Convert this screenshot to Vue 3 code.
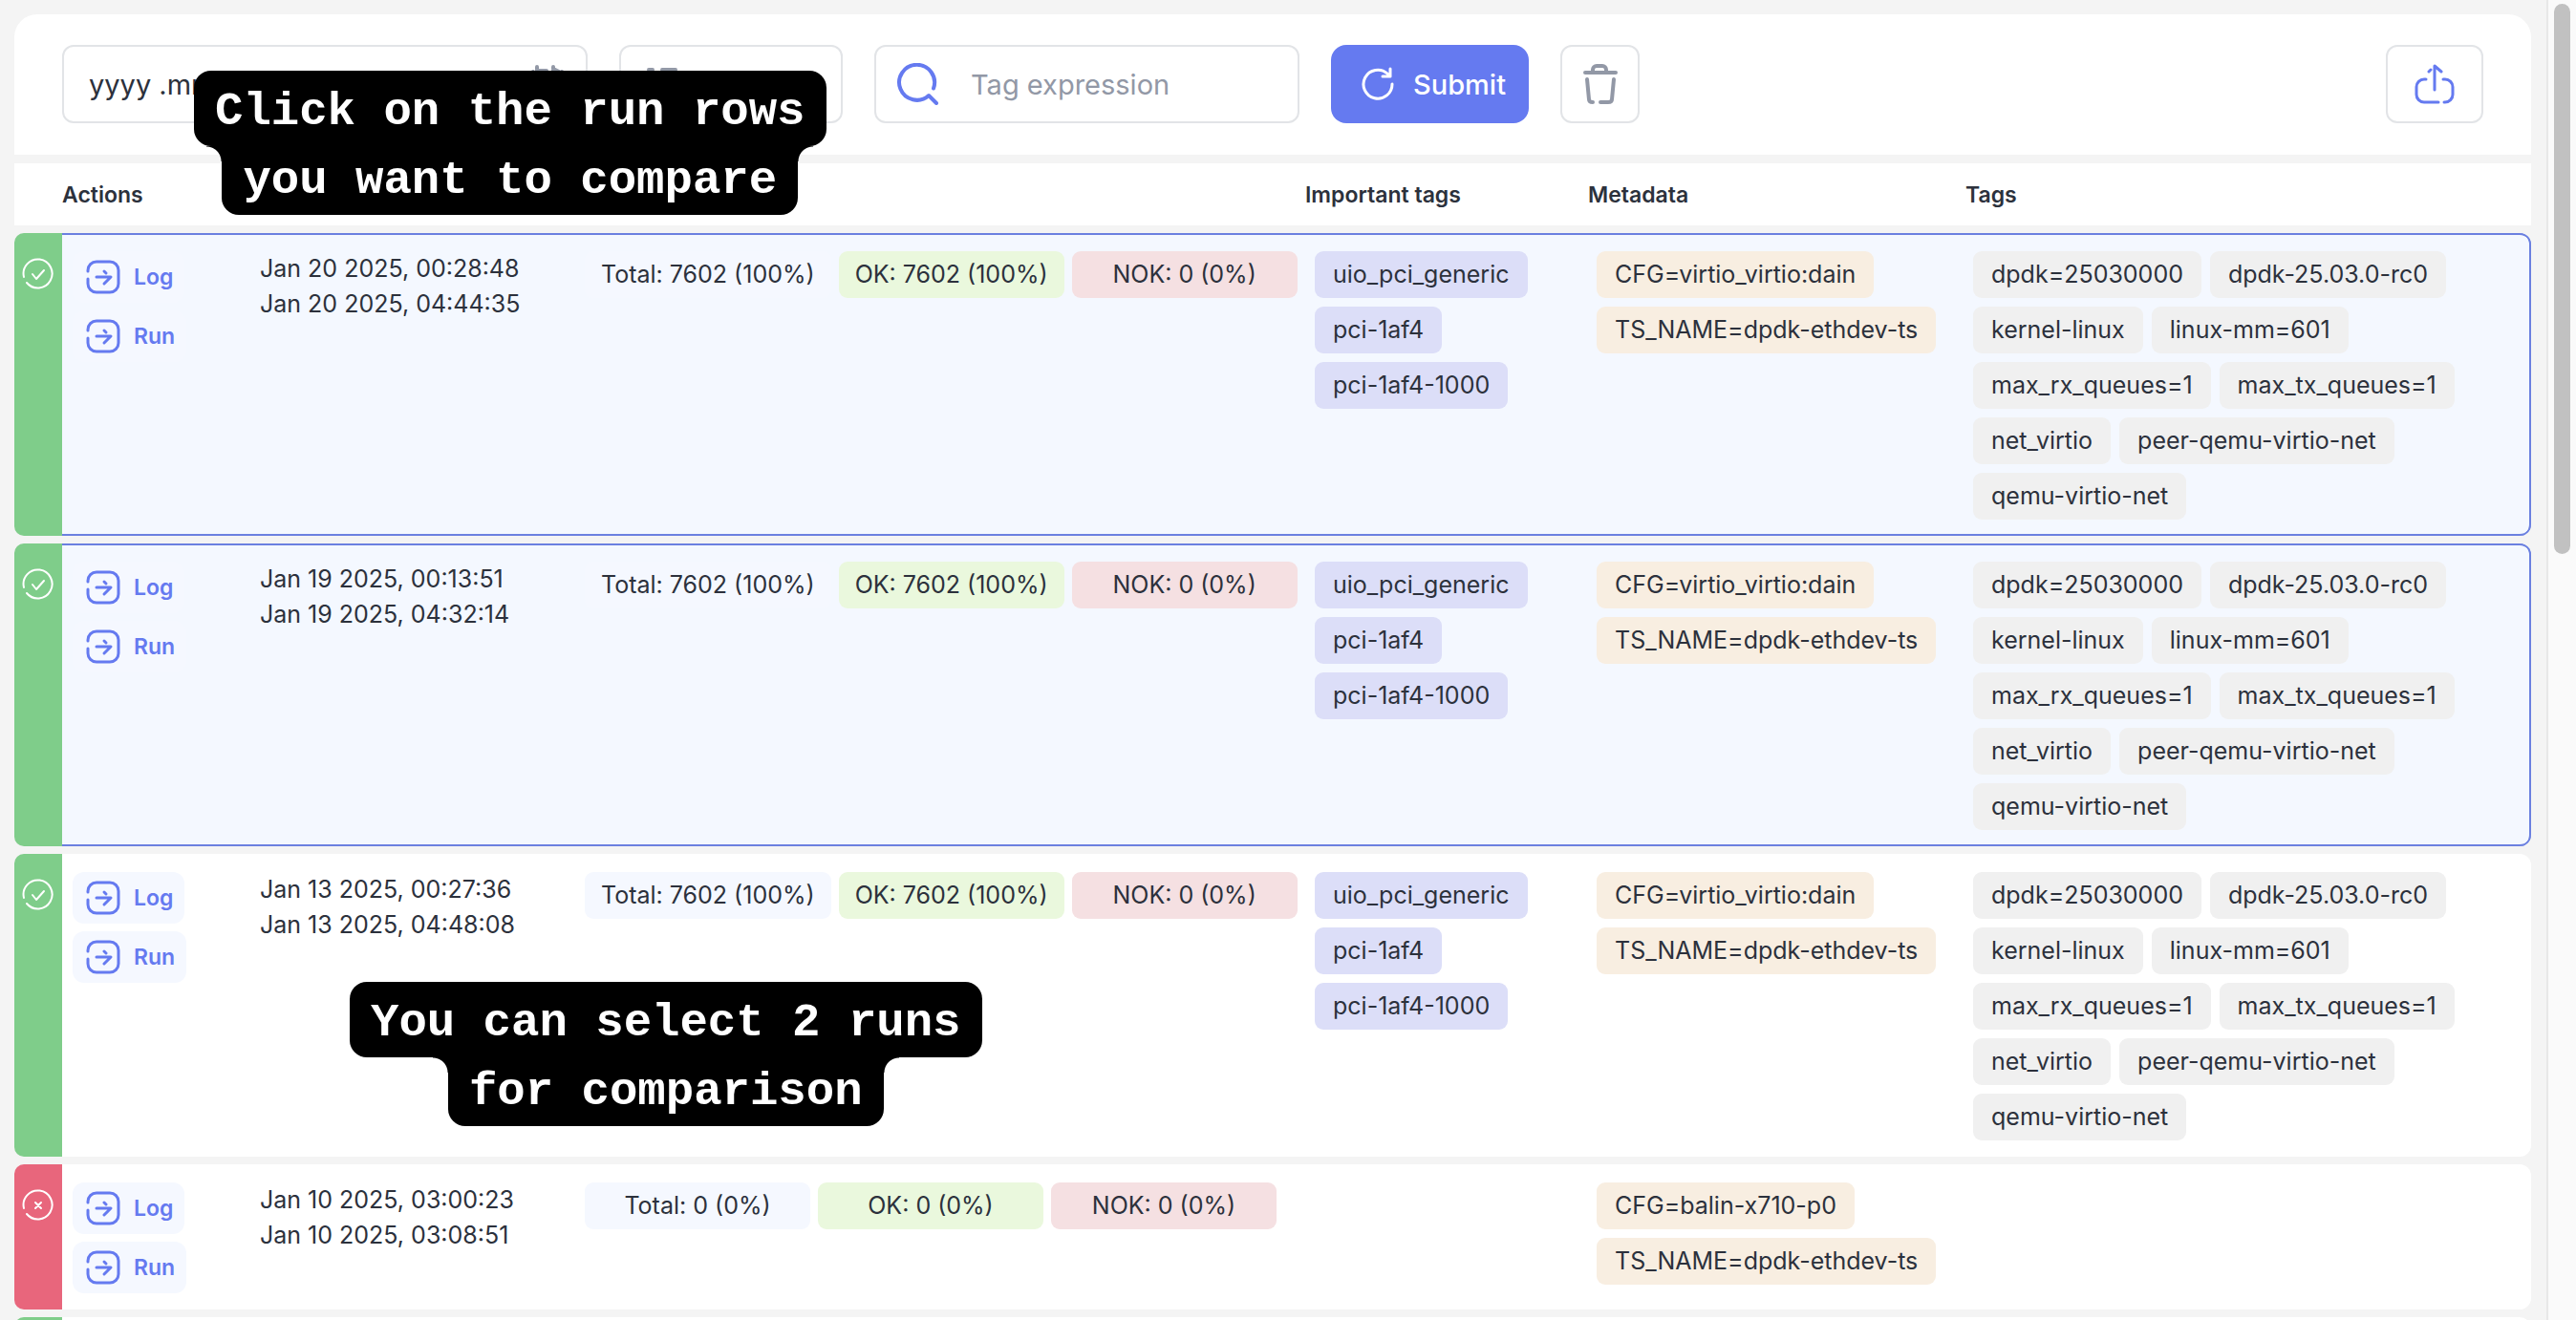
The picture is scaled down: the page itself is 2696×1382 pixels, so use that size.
<script setup>
const tags = [
  'dpdk=25030000', 'dpdk-25.03.0-rc0', 'kernel-linux', 'linux-mm=601',
  'max_rx_queues=1', 'max_tx_queues=1', 'net_virtio', 'peer-qemu-virtio-net', 'qemu-virtio-net',
]
const important = ['uio_pci_generic', 'pci-1af4', 'pci-1af4-1000']
const virtio = ['CFG=virtio_virtio:dain', 'TS_NAME=dpdk-ethdev-ts']
const links = ['Log', 'Run']
const full = { total: '7602 (100%)', ok: '7602 (100%)', nok: '0 (0%)' }
const empty = { total: '0 (0%)', ok: '0 (0%)', nok: '0 (0%)' }

const runs = [
  { id: 1, ok: true, selected: true, links, start: 'Jan 20 2025, 00:28:48', finish: 'Jan 20 2025, 04:44:35', stats: full, important, meta: virtio, tags },
  { id: 2, ok: true, selected: true, links, start: 'Jan 19 2025, 00:13:51', finish: 'Jan 19 2025, 04:32:14', stats: full, important, meta: virtio, tags },
  { id: 3, ok: true, selected: false, links, start: 'Jan 13 2025, 00:27:36', finish: 'Jan 13 2025, 04:48:08', stats: full, important, meta: virtio, tags },
  { id: 4, ok: false, selected: false, links, start: 'Jan 10 2025, 03:00:23', finish: 'Jan 10 2025, 03:08:51', stats: empty, important: [], meta: ['CFG=balin-x710-p0', 'TS_NAME=dpdk-ethdev-ts'], tags: [] },
  { id: 5, ok: true, selected: false, links: [], start: '', finish: '', stats: null, important: [], meta: [], tags: [] },
]
</script>

<template>
  <div class="page">
    <main class="content">
      <form class="toolbar" @submit.prevent>
        <label class="field date">
          <input type="text" value="yyyy .mm.dd" aria-label="Date range" />
          <svg class="icon40" viewBox="0 0 40 40"><path d="M9 2v7M9 6h10M26 2v7M26 4l6 3M5 7q-3 2-3 6v17a7 7 0 0 0 7 7h22a7 7 0 0 0 7-7V13q0-4-3-6M2 15h36" /></svg>
        </label>
        <button class="field mode" type="button" aria-label="View mode">
          <svg class="icon40" viewBox="0 0 40 40"><path d="M6 5h4M20 5h14M2 12h8M20 12h18M2 22h8M20 22h18M2 32h8M20 32h18" /></svg>
        </button>
        <label class="field search">
          <svg class="search-icon" viewBox="0 0 44 44"><path d="M39 26.500A18.500 18.500 0 1 0 34 34l8 8" /></svg>
          <input type="text" placeholder="Tag expression" aria-label="Tag expression" />
        </label>
        <button class="submit" type="submit">
          <svg class="icon36" viewBox="0 0 36 36"><path d="M33 18A15 15 0 1 1 28 7l3 3M31 2v8h-8" /></svg>
          Submit
        </button>
        <button class="field trash" type="button" aria-label="Clear">
          <svg class="trash-icon" viewBox="0 0 36 42"><path d="M2 9h32M10 9V6a4 4 0 0 1 4-4h6a4 4 0 0 1 4 4v3M4 16l2 21q0 3 4 3M32 16l-2 21q0 3-4 3h-8" /></svg>
        </button>
        <button class="field share" type="button" aria-label="Share">
          <svg class="share-icon" viewBox="0 0 42 42"><path d="M21 27V2l7 6M15 8l2-2M12 16h-2a8 8 0 0 0-8 8v8a8 8 0 0 0 8 8h15M30 16h2a8 8 0 0 1 8 8v8a8 8 0 0 1-8 8h-1" /></svg>
        </button>
      </form>

      <div class="head">
        <span class="c-actions">Actions</span>
        <span class="c-important">Important tags</span>
        <span class="c-meta">Metadata</span>
        <span>Tags</span>
      </div>

      <article v-for="run in runs" :key="run.id" class="run" :class="{ selected: run.selected, failed: !run.ok }">
        <div class="status">
          <svg class="status-icon" viewBox="0 0 34 34">
            <path d="M2 20A15 15 0 1 1 5 26" />
            <path v-if="run.ok" d="M11 17l4 5 8-9" />
            <path v-else d="M14 14l6 6M20 14l-6 6" />
          </svg>
        </div>
        <div class="body">
          <div class="actions">
            <a v-for="name in run.links" :key="name" class="action" href="#">
              <svg class="icon36" viewBox="0 0 36 36"><path d="M2 12v-1a9 9 0 0 1 9-9h14a9 9 0 0 1 9 9v14a9 9 0 0 1-9 9H11a9 9 0 0 1-9-9v-5M11 18h15l-7 7M19 12l2 2" /></svg>
              {{ name }}
            </a>
          </div>
          <div class="dates">{{ run.start }}<br />{{ run.finish }}</div>
          <div class="stats">
            <template v-if="run.stats">
              <span class="chip total">Total: {{ run.stats.total }}</span>
              <span class="chip ok">OK: {{ run.stats.ok }}</span>
              <span class="chip nok">NOK: {{ run.stats.nok }}</span>
            </template>
          </div>
          <div class="chips important">
            <span v-for="t in run.important" :key="t" class="chip violet">{{ t }}</span>
          </div>
          <div class="chips meta">
            <span v-for="t in run.meta" :key="t" class="chip sand">{{ t }}</span>
          </div>
          <div class="chips tags">
            <span v-for="t in run.tags" :key="t" class="chip gray">{{ t }}</span>
          </div>
        </div>
      </article>
    </main>
    <div class="scrollbar"><div class="thumb"></div></div>

    <div class="callout first"><span>Click on the run rows</span><span>you want to compare</span></div>
    <div class="callout second"><span>You can select 2 runs</span><span>for comparison</span></div>
  </div>
</template>

<style>
body {
  background: #f4f4f4;
}
</style>

<style scoped>
.page {
  position: relative;
  display: flex;
  height: 100vh;
  overflow: hidden;
  font-family: Inter, "Liberation Sans", sans-serif;
  font-size: 25px;
  color: #2c313c;
}
.page * {
  box-sizing: border-box;
}
.content {
  flex: 1;
  min-width: 0;
  padding: 15px 16px 0 15px;
}
svg {
  flex: none;
  display: block;
  fill: none;
  stroke: currentColor;
  stroke-width: 3;
  stroke-linecap: round;
  stroke-linejoin: round;
}
button, input {
  font: inherit;
  color: inherit;
}
.toolbar {
  display: flex;
  gap: 33px;
  padding: 32px 50px 33px;
  background: #fff;
  border-radius: 24px 24px 0 0;
  font-size: 29px;
}
.field {
  display: flex;
  align-items: center;
  height: 82px;
  border: 2px solid #e2e4e7;
  border-radius: 12px;
  background: #fff;
  color: #9298a6;
}
.field input {
  flex: 1;
  min-width: 0;
  padding: 0;
  border: 0;
  outline: 0;
  background: none;
}
.date {
  width: 550px;
  padding: 0 20px 0 26px;
}
.date input {
  color: #2c313c;
}
.mode {
  width: 234px;
  padding: 0 23px;
}
.search {
  width: 445px;
  padding: 0 21px;
  gap: 34px;
}
.search input::placeholder {
  color: #9298a6;
  opacity: 1;
}
.search-icon {
  width: 44px;
  height: 44px;
  stroke-width: 4;
  color: #657af0;
}
.submit {
  display: flex;
  align-items: center;
  gap: 19px;
  height: 82px;
  width: 207px;
  padding: 0 0 0 31px;
  border: 0;
  border-radius: 16px;
  background: #657af0;
  color: #fff;
  font-weight: 500;
}
.trash {
  justify-content: center;
  width: 83px;
  padding: 0;
}
.trash-icon {
  width: 36px;
  height: 42px;
  stroke-width: 4;
}
.share {
  justify-content: center;
  width: 102px;
  margin-left: auto;
  padding: 0;
  color: #657af0;
}
.share-icon {
  width: 42px;
  height: 42px;
}
.icon40 {
  width: 40px;
  height: 40px;
  stroke-width: 4;
}
.icon36 {
  width: 36px;
  height: 36px;
}
.head {
  display: flex;
  align-items: center;
  height: 65px;
  margin: 9px 0 8px;
  padding-left: 50px;
  background: #fff;
  font-size: 23px;
  font-weight: 600;
}
.c-actions {
  width: 1301px;
}
.c-important {
  width: 296px;
}
.c-meta {
  width: 395px;
}
.run {
  display: flex;
  margin-bottom: 8px;
}
.status {
  width: 50px;
  padding: 26px 8px 0;
  border-radius: 10px 0 0 10px;
  background: #7fcd8a;
  color: #fff;
}
.failed .status {
  background: #e8667c;
}
.status-icon {
  width: 34px;
  height: 34px;
  stroke-width: 2;
}
.body {
  flex: 1;
  display: flex;
  min-width: 0;
  padding: 19px 16px 17px 11px;
  border-radius: 0 12px 12px 0;
  background: #fff;
}
.selected .body {
  background: #f4f8ff;
  box-shadow: inset 0 2px #6b80e0, inset 0 -2px #6b80e0, inset -2px 0 #6b80e0;
}
.actions {
  display: flex;
  flex-direction: column;
  align-items: flex-start;
  gap: 8px;
  width: 196px;
}
.action {
  display: flex;
  align-items: center;
  gap: 14px;
  height: 54px;
  padding: 0 12px 0 14px;
  border-radius: 12px;
  background: #f5f8ff;
  color: #657af0;
  font-size: 23px;
  font-weight: 600;
  text-decoration: none;
}
.dates {
  width: 340px;
  line-height: 37px;
}
.stats {
  display: flex;
  align-items: flex-start;
  gap: 8px;
  width: 764px;
}
.chip {
  height: 49px;
  padding: 0 19px;
  border-radius: 9px;
  line-height: 49px;
  white-space: nowrap;
}
.stats .chip {
  min-width: 236px;
  padding: 0 17px;
  text-align: center;
}
.total {
  background: #f5f8ff;
}
.ok {
  background: #eaf8dd;
}
.nok {
  background: #f5e0e2;
}
.chips {
  display: flex;
  flex-wrap: wrap;
  align-content: flex-start;
  gap: 9px;
}
.important {
  flex-direction: column;
  flex-wrap: nowrap;
  align-items: flex-start;
  width: 295px;
}
.meta {
  flex-direction: column;
  flex-wrap: nowrap;
  align-items: flex-start;
  width: 394px;
}
.tags {
  flex: 1;
}
.violet {
  background: #dcdef8;
}
.sand {
  background: #f8eee1;
}
.gray {
  background: #f0f0f0;
}
.scrollbar {
  width: 31px;
  padding: 4px 6px;
  border-left: 2px solid #e8e8e8;
  background: #fafafa;
}
.thumb {
  width: 17px;
  height: 576px;
  border-radius: 9px;
  background: #c1c1c1;
}
.callout {
  position: absolute;
  display: flex;
  flex-direction: column;
  align-items: center;
  color: #fff;
  font: bold 49px/72px "Liberation Mono", monospace;
  white-space: nowrap;
}
.callout span {
  position: relative;
  padding: 0 22px;
  border-radius: 0 0 18px 18px;
  background: #000;
}
.callout span:first-child {
  padding-top: 7px;
  border-radius: 18px;
}
.callout span:last-child::before,
.callout span:last-child::after {
  content: "";
  position: absolute;
  top: 0;
  width: 16px;
  height: 16px;
}
.callout span:last-child::before {
  right: 100%;
  background: radial-gradient(circle at 0 100%, transparent 15px, #000 16px);
}
.callout span:last-child::after {
  left: 100%;
  background: radial-gradient(circle at 100% 100%, transparent 15px, #000 16px);
}
.first {
  left: 203px;
  top: 74px;
}
.second {
  left: 366px;
  top: 1028px;
}
</style>
